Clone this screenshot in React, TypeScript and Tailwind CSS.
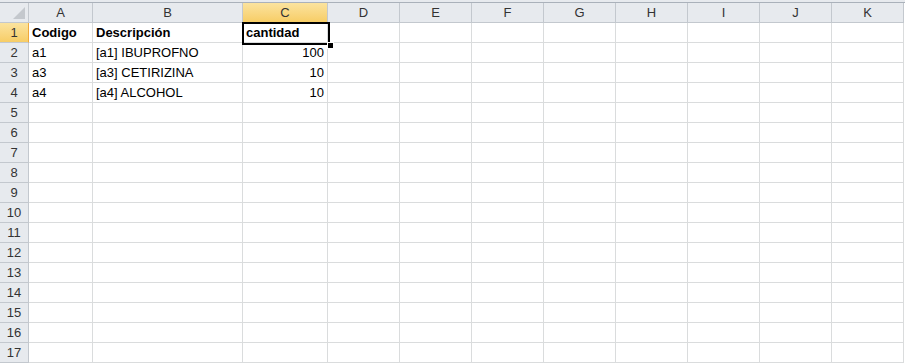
import React from "react";

const cols = ["A", "B", "C", "D", "E", "F", "G", "H", "I", "J", "K"];
const data: Record<number, [string, string, string]> = {
  1: ["Codigo", "Descripción", "cantidad"],
  2: ["a1", "[a1] IBUPROFNO", "100"],
  3: ["a3", "[a3] CETIRIZINA", "10"],
  4: ["a4", "[a4] ALCOHOL", "10"],
};

export default function App() {
  const rows = Array.from({ length: 17 }, (_, i) => i + 1);
  return (
    <div
      className="w-[905px] h-[364px] overflow-hidden bg-white text-[14px] text-black"
      style={{ fontFamily: '"Liberation Sans", Arial, sans-serif' }}
    >
      <div className="h-[2px] bg-[#e7eaee]" />
      <div className="h-[1px] bg-[#aab1ba]" />
      <div className="relative grid grid-cols-[29px_64px_150px_85px_repeat(8,72px)] grid-rows-[20px_repeat(17,20px)]">
        {/* corner */}
        <div className="relative border-r border-b border-[#c3c8ce] bg-[#e7eaee]">
          <div className="absolute right-[3px] bottom-[3px] w-0 h-0 border-l-[12px] border-l-transparent border-b-[12px] border-b-[#c4c8cd]" />
        </div>
        {cols.map((c) => (
          <div
            key={c}
            className={
              c === "C"
                ? "flex items-center justify-center border-r border-b border-r-[#c3c8ce] border-b-[#f0a83a] bg-gradient-to-b from-[#fbe39e] to-[#f7cd65] text-[13px] text-[#333]"
                : "flex items-center justify-center border-r border-b border-[#c3c8ce] bg-[#e7eaee] text-[13px] text-[#333]"
            }
          >
            {c}
          </div>
        ))}
        {rows.map((r) => (
          <React.Fragment key={r}>
            <div
              className={
                r === 1
                  ? "flex items-center justify-center border-r border-b border-b-[#c3c8ce] border-r-[#f0a83a] bg-gradient-to-b from-[#fbe39e] to-[#f7cd65] text-[13px] text-[#333]"
                  : "flex items-center justify-center border-r border-b border-[#c3c8ce] bg-[#e7eaee] text-[13px] text-[#333]"
              }
            >
              {r}
            </div>
            {cols.map((c, ci) => {
              const v = data[r] && ci < 3 ? data[r][ci] : "";
              const num = r > 1 && ci === 2;
              return (
                <div
                  key={c}
                  className={
                    "flex items-center border-r border-b border-[#dadcdd] px-[3px] whitespace-nowrap overflow-hidden text-[13px] " +
                    (num ? "justify-end " : "") +
                    (r === 1 ? "font-bold" : "")
                  }
                >
                  {v}
                </div>
              );
            })}
          </React.Fragment>
        ))}
        {/* selection of C1 */}
        <div className="pointer-events-none absolute left-[242px] top-[19px] w-[88px] h-[23px] border-2 border-black" />
        <div className="pointer-events-none absolute left-[327px] top-[39px] w-[5px] h-[5px] bg-black border border-white box-content" />
      </div>
    </div>
  );
}
